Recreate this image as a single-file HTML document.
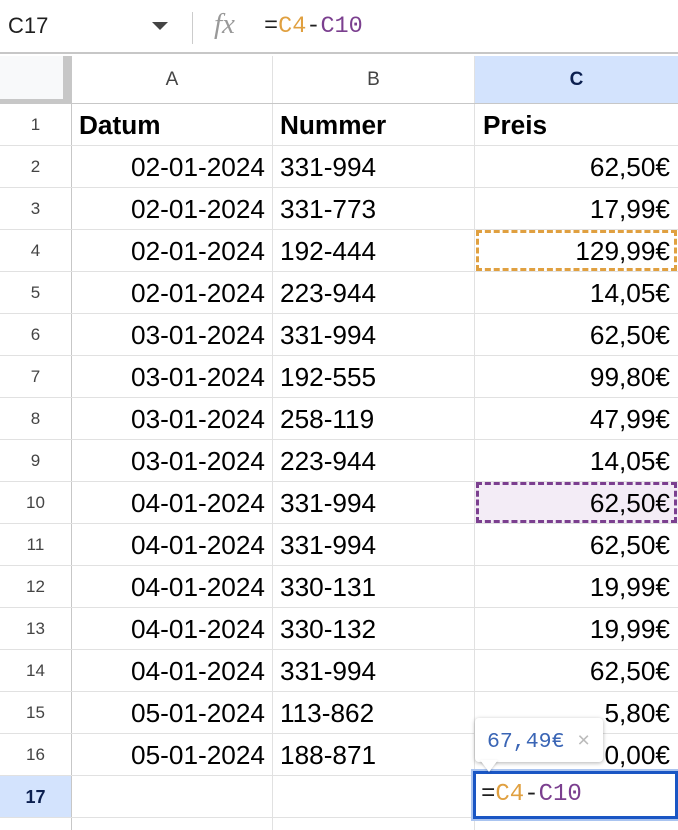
<!DOCTYPE html>
<html><head><meta charset="utf-8"><style>
*{margin:0;padding:0;box-sizing:border-box}
html,body{width:678px;height:830px;overflow:hidden}
body{background:#fff;font-family:"Liberation Sans",Arial,sans-serif;position:relative}
.fb{position:absolute;left:0;top:0;width:678px;height:54px;border-bottom:2px solid #c7c7c7}
.nm{position:absolute;left:8px;top:13px;font-size:22px;color:#1f1f1f}
.dd{position:absolute;left:152px;top:22px;width:0;height:0;border-left:8px solid transparent;border-right:8px solid transparent;border-top:8px solid #444}
.sep{position:absolute;left:192px;top:12px;width:1px;height:32px;background:#ccc}
.fx{position:absolute;left:214px;top:8px;font-family:"Liberation Serif",serif;font-style:italic;font-size:29px;color:#999}
.fm{position:absolute;left:264px;top:13px;font-family:"Liberation Mono",monospace;font-size:23.5px;color:#1f1f1f}
.o{color:#e0a040}.p{color:#7b3f8f}
.row{position:absolute;left:0;width:678px;height:42px;border-bottom:1px solid #e1e1e1}
.row div{position:absolute;top:0;height:41px;line-height:42px;font-size:26.2px;color:#000}
.rh{left:0;width:72px;text-align:center;font-size:17px!important;color:#444!important;background:#fff;border-right:1px solid #c7c7c7}
.a{left:72px;width:201px;text-align:right;padding-right:7px;border-right:1px solid #e1e1e1}
.b{left:273px;width:202px;padding-left:7px;border-right:1px solid #e1e1e1}
.c{left:475px;width:203px;text-align:right;padding-right:8px}
.hd div{line-height:47px;height:47px;font-size:19px;color:#444}
b{font-weight:bold}
</style></head><body>
<div class="fb"><span class="nm">C17</span><span class="dd"></span><span class="sep"></span><span class="fx">fx</span><span class="fm">=<span class="o">C4</span>-<span class="p">C10</span></span></div>
<div class="row hd" style="top:56px;height:48px;border-bottom:1px solid #c7c7c7">
<div style="left:0;width:72px;background:#f8f9fa;border-right:9px solid #c7c7c7;border-bottom:4px solid #c7c7c7;height:47px"></div>
<div class="a" style="text-align:center;padding:0">A</div>
<div class="b" style="text-align:center;padding:0">B</div>
<div class="c" style="text-align:center;padding:0;background:#d3e3fd;color:#0b1f4f;font-weight:bold">C</div>
</div>
<div class="row" style="top:104px"><div class="rh">1</div><div class="a" style="text-align:left;padding-left:7px"><b>Datum</b></div><div class="b"><b>Nummer</b></div><div class="c" style="text-align:left;padding-left:8px"><b>Preis</b></div></div>
<div class="row" style="top:146px"><div class="rh">2</div><div class="a">02-01-2024</div><div class="b">331-994</div><div class="c">62,50€</div></div>
<div class="row" style="top:188px"><div class="rh">3</div><div class="a">02-01-2024</div><div class="b">331-773</div><div class="c">17,99€</div></div>
<div class="row" style="top:230px"><div class="rh">4</div><div class="a">02-01-2024</div><div class="b">192-444</div><div class="c">129,99€</div></div>
<div class="row" style="top:272px"><div class="rh">5</div><div class="a">02-01-2024</div><div class="b">223-944</div><div class="c">14,05€</div></div>
<div class="row" style="top:314px"><div class="rh">6</div><div class="a">03-01-2024</div><div class="b">331-994</div><div class="c">62,50€</div></div>
<div class="row" style="top:356px"><div class="rh">7</div><div class="a">03-01-2024</div><div class="b">192-555</div><div class="c">99,80€</div></div>
<div class="row" style="top:398px"><div class="rh">8</div><div class="a">03-01-2024</div><div class="b">258-119</div><div class="c">47,99€</div></div>
<div class="row" style="top:440px"><div class="rh">9</div><div class="a">03-01-2024</div><div class="b">223-944</div><div class="c">14,05€</div></div>
<div class="row" style="top:482px"><div class="rh">10</div><div class="a">04-01-2024</div><div class="b">331-994</div><div class="c" style="background:#f3ecf6">62,50€</div></div>
<div class="row" style="top:524px"><div class="rh">11</div><div class="a">04-01-2024</div><div class="b">331-994</div><div class="c">62,50€</div></div>
<div class="row" style="top:566px"><div class="rh">12</div><div class="a">04-01-2024</div><div class="b">330-131</div><div class="c">19,99€</div></div>
<div class="row" style="top:608px"><div class="rh">13</div><div class="a">04-01-2024</div><div class="b">330-132</div><div class="c">19,99€</div></div>
<div class="row" style="top:650px"><div class="rh">14</div><div class="a">04-01-2024</div><div class="b">331-994</div><div class="c">62,50€</div></div>
<div class="row" style="top:692px"><div class="rh">15</div><div class="a">05-01-2024</div><div class="b">113-862</div><div class="c">5,80€</div></div>
<div class="row" style="top:734px"><div class="rh">16</div><div class="a">05-01-2024</div><div class="b">188-871</div><div class="c">0,00€</div></div>
<div class="row" style="top:776px"><div class="rh" style="background:#d3e3fd;color:#0b1f4f!important;font-weight:bold;font-size:18px!important">17</div><div class="a"></div><div class="b"></div><div class="c"></div></div>
<div class="row" style="top:818px"><div class="rh">18</div><div class="a"></div><div class="b"></div><div class="c"></div></div>
<div style="position:absolute;left:476px;top:230px;width:201px;height:41px;border:3px dashed #e0a040"></div>
<div style="position:absolute;left:476px;top:482px;width:201px;height:41px;border:3px dashed #7b3f8f"></div>
<div style="position:absolute;left:473px;top:771px;width:205px;height:48px;border:3px solid #1a56c4;background:#fff;box-shadow:0 0 0 2px #aac4f0;font-family:'Liberation Mono',monospace;font-size:24px;line-height:42px;padding-left:5px;color:#1f1f1f">=<span class="o">C4</span>-<span class="p">C10</span></div>
<div style="position:absolute;left:475px;top:718px;width:128px;height:44px;background:#fff;border-radius:4px;box-shadow:0 1px 4px rgba(0,0,0,.3);font-family:'Liberation Mono',monospace;font-size:21.5px;line-height:44px;padding-left:12px;color:#3a65b5">67,49€ <span style="color:#bbb;font-family:'Liberation Sans',sans-serif">×</span></div>
<div style="position:absolute;left:480px;top:760px;width:0;height:0;border-left:9px solid transparent;border-right:9px solid transparent;border-top:12px solid #fff;filter:drop-shadow(0 1px 1px rgba(0,0,0,.2))"></div>
</body></html>
